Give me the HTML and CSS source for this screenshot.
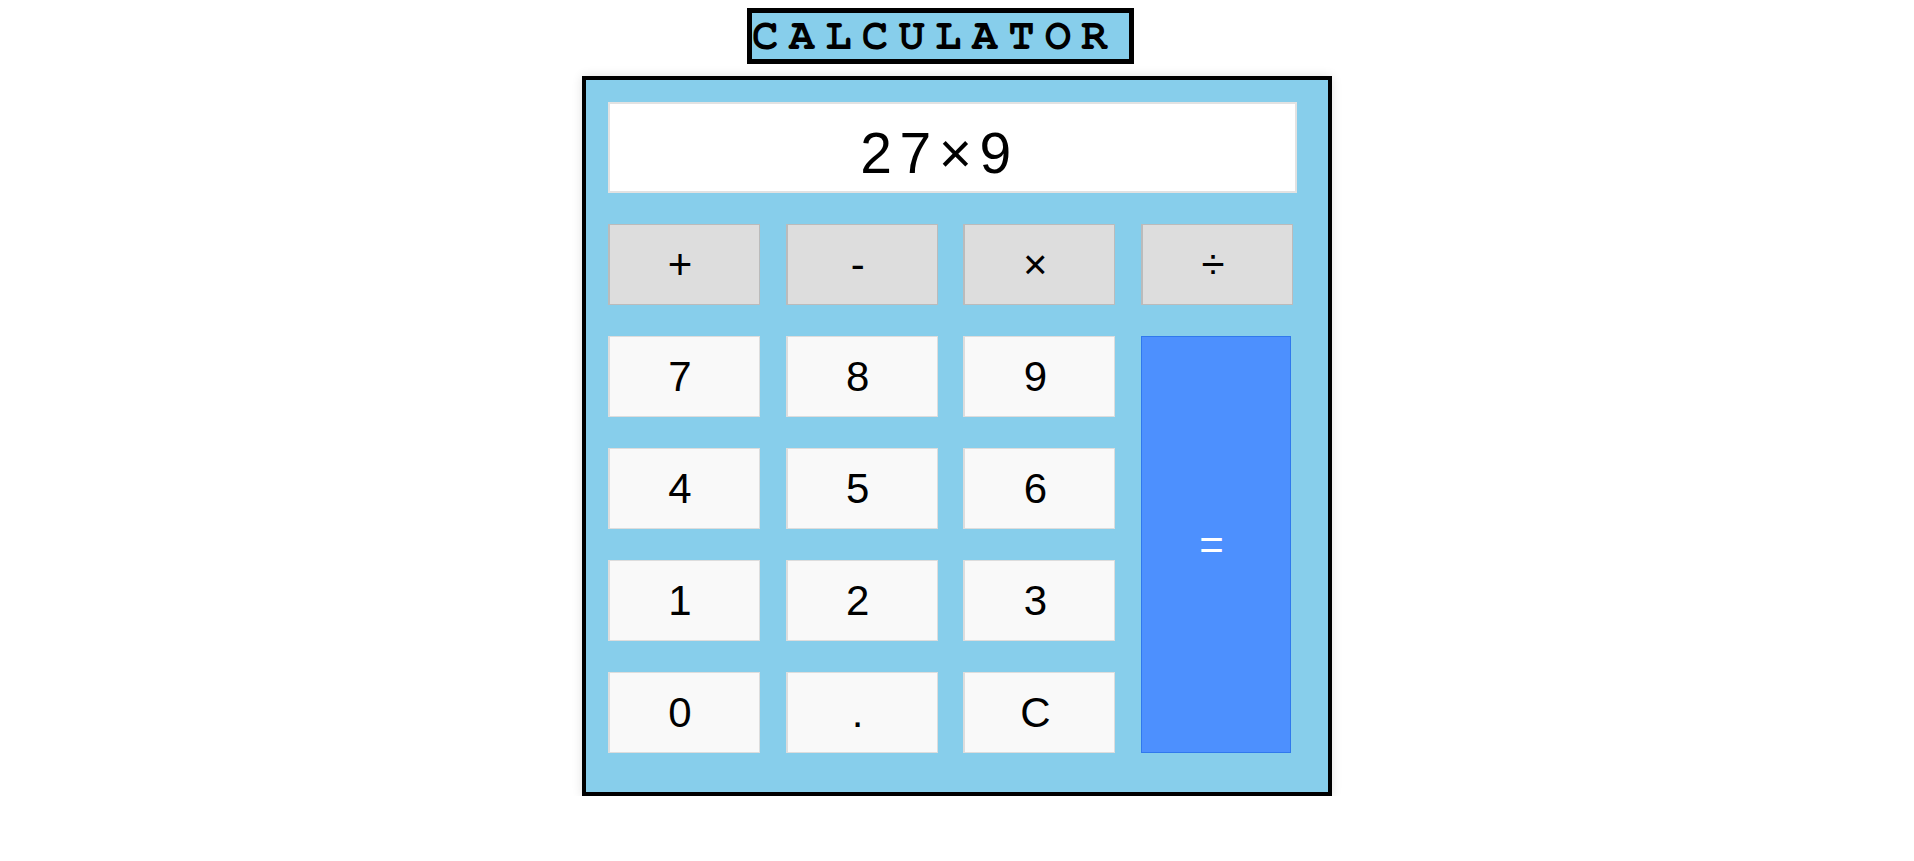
FILE: index.html
```html
<!DOCTYPE html>
<html>
<head>
<meta charset="utf-8">
<title>Calculator</title>
<link rel="stylesheet" href="styles.css">
</head>
<body>
<div class="page">
  <h1 class="title">CALCULATOR</h1>
  <div class="calc">
    <div class="display">27×9</div>
    <div class="keys">
      <button class="key op">+</button>
      <button class="key op">-</button>
      <button class="key op">×</button>
      <button class="key op">÷</button>
      <button class="key num">7</button>
      <button class="key num">8</button>
      <button class="key num">9</button>
      <button class="key eq">=</button>
      <button class="key num">4</button>
      <button class="key num">5</button>
      <button class="key num">6</button>
      <button class="key num">1</button>
      <button class="key num">2</button>
      <button class="key num">3</button>
      <button class="key num">0</button>
      <button class="key num">.</button>
      <button class="key num">C</button>
    </div>
  </div>
</div>
</body>
</html>
```
FILE: styles.css
```css
html, body {
  margin: 0;
  padding: 0;
  background: #ffffff;
}
body {
  padding-top: 8px;
  font-family: "Liberation Sans", Arial, sans-serif;
}
.page {
  display: flex;
  flex-direction: column;
  align-items: center;
}
.title {
  margin: 0 33px 12px 0;
  background: #87ceeb;
  border: 5px solid #000;
  font-family: "Nimbus Mono PS", "FreeMono", "Courier", "Courier New", "Liberation Mono", monospace;
  font-weight: bold;
  font-size: 44px;
  line-height: 46px;
  letter-spacing: 10.2px;
  padding: 0;
  width: 377px;
  box-sizing: content-box;
  white-space: nowrap;
  overflow: hidden;
}
.calc {
  width: 689px;
  background: #87ceeb;
  border: 4px solid #000;
  padding: 22px 31px 39px 22px;
  box-shadow: 0 0 10px rgba(0, 0, 0, 0.12);
}
.display {
  box-sizing: border-box;
  height: 91px;
  width: 689px;
  background: #fff;
  border: 2px solid #e2e2e2;
  font-size: 57px;
  letter-spacing: 7.5px;
  display: flex;
  align-items: center;
  justify-content: center;
  padding: 11px 26px 0 0;
  color: #000;
}
.keys {
  margin-top: 31px;
  display: grid;
  grid-template-columns: repeat(4, 152px);
  grid-template-rows: repeat(5, 81px);
  column-gap: 25.67px;
  row-gap: 31px;
}
.key {
  box-sizing: border-box;
  margin: 0;
  font-family: "Liberation Sans", Arial, sans-serif;
  font-size: 42px;
  color: #000;
  padding: 0 9px 0 0;
  display: flex;
  align-items: center;
  justify-content: center;
  cursor: pointer;
}
.op {
  background: #dddddd;
  border: 1px solid #bbbbbb;
  border-left-width: 2px;
}
.num {
  background: #f9f9f9;
  border: 1px solid #dddddd;
  border-left-width: 2px;
}
.eq {
  grid-column: 4;
  grid-row: 2 / span 4;
  width: 150px;
  background: #4d90fe;
  border: 1px solid #3079ed;
  color: #fff;
}
```
